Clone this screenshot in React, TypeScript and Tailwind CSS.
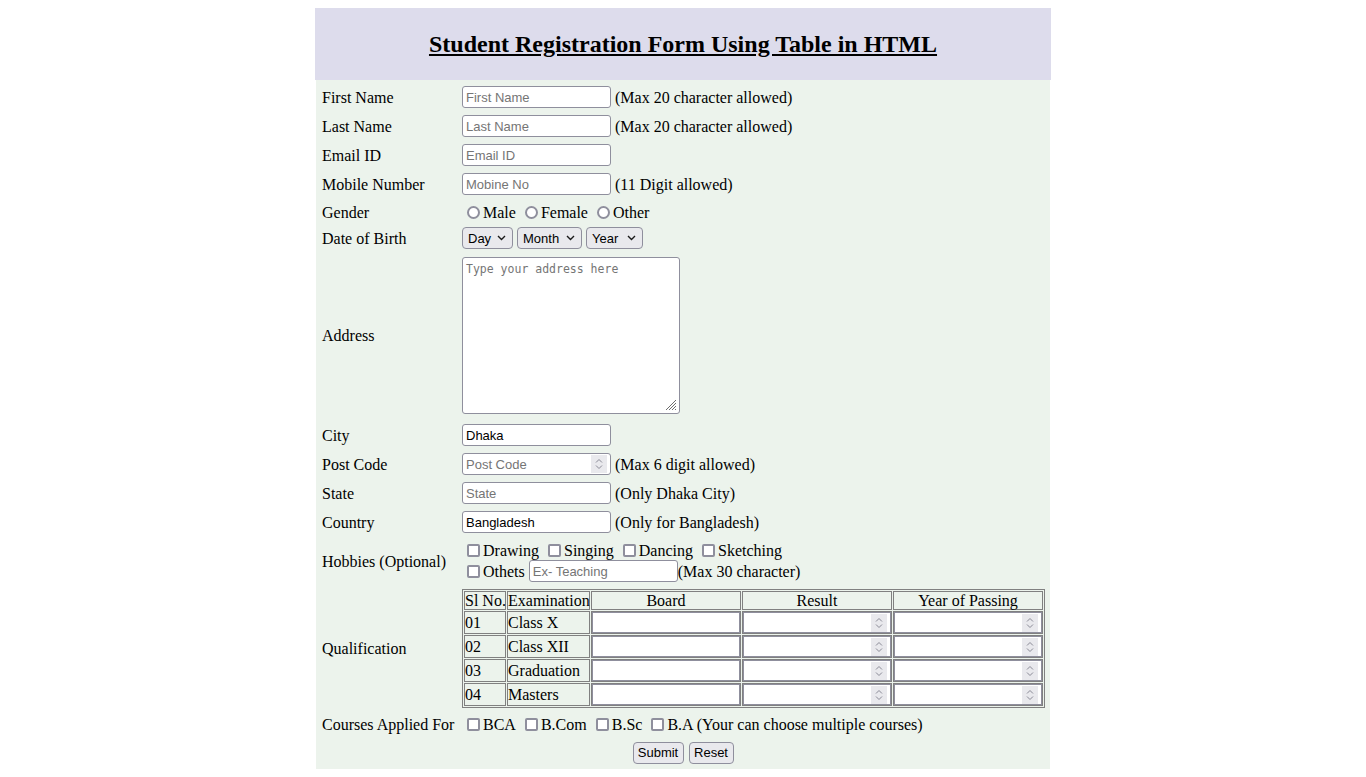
import type { ReactNode } from "react"

function Row({ label, className, children }: { label: string; className: string; children: ReactNode }) {
  return (
    <div className={`flex items-center ${className}`}>
      <div className="w-[146px] shrink-0 pl-[6px] pt-[1px] whitespace-nowrap">{label}</div>
      <div className="flex items-center">{children}</div>
    </div>
  )
}

function TextBox({ text, filled, width = "w-[149px]" }: { text: string; filled?: boolean; width?: string }) {
  return (
    <div
      className={`${width} h-[22px] shrink-0 bg-white border border-[#8f8f9d] rounded-[3px] px-[3px] pt-[1px] flex items-center font-['Liberation_Sans',sans-serif] text-[13px] ${
        filled ? "text-black" : "text-[#757575]"
      }`}
    >
      {text}
    </div>
  )
}

function Spinner() {
  return (
    <span className="w-[16px] h-[18px] shrink-0 bg-[#e9e9ed] flex items-center justify-center">
      <svg width="8" height="12" viewBox="0 0 8 12" fill="none" stroke="#8a8a96" strokeWidth="1">
        <path d="M1 4.5 L4 1.5 L7 4.5" />
        <path d="M1 7.5 L4 10.5 L7 7.5" />
      </svg>
    </span>
  )
}

function Choice({ label, round }: { label: string; round?: boolean }) {
  return (
    <span className="flex items-center">
      <span
        className={`w-[13px] h-[13px] shrink-0 ml-[5px] mr-[3px] bg-white border-2 border-[#8f8f9d] ${
          round ? "rounded-full" : "rounded-[2px]"
        }`}
      />
      <span className="whitespace-nowrap pt-[1px]">{label}</span>
    </span>
  )
}

function Select({ text, width }: { text: string; width: string }) {
  return (
    <div
      className={`${width} h-[22px] bg-[#e9e9ed] border border-[#8f8f9d] rounded-[4px] pl-[5px] pr-[6px] flex items-center justify-between font-['Liberation_Sans',sans-serif] text-[13px] text-black`}
    >
      <span className="pt-[1px]">{text}</span>
      <svg width="9" height="6" viewBox="0 0 9 6" fill="none" stroke="#1b1b1b" strokeWidth="1.4">
        <path d="M1 1 L4.5 4.5 L8 1" />
      </svg>
    </div>
  )
}

const exams = [
  ["01", "Class X"],
  ["02", "Class XII"],
  ["03", "Graduation"],
  ["04", "Masters"],
]

export default function App() {
  return (
    <div className="w-[736px] mx-auto mt-[8px] font-['Liberation_Serif',serif] text-[16px] leading-[20px] text-black">
      {/* Header */}
      <div className="h-[72px] bg-[#dddcec] flex items-center justify-center">
        <h2 className="text-[24px] font-bold underline leading-[28px]">Student Registration Form Using Table in HTML</h2>
      </div>

      {/* Form body */}
      <div className="mx-[1px] bg-[#ecf3ec] pt-[6px] pb-[5px] flex flex-col">
        <Row label="First Name" className="h-[22px]">
          <TextBox text="First Name" />
          <span className="ml-[4px] pt-[1px]">(Max 20 character allowed)</span>
        </Row>
        <Row label="Last Name" className="h-[22px] mt-[7px]">
          <TextBox text="Last Name" />
          <span className="ml-[4px] pt-[1px]">(Max 20 character allowed)</span>
        </Row>
        <Row label="Email ID" className="h-[22px] mt-[7px]">
          <TextBox text="Email ID" />
        </Row>
        <Row label="Mobile Number" className="h-[22px] mt-[7px]">
          <TextBox text="Mobine No" />
          <span className="ml-[4px] pt-[1px]">(11 Digit allowed)</span>
        </Row>
        <Row label="Gender" className="h-[20px] mt-[7px]">
          <div className="flex items-center gap-[4px]">
            <Choice round label="Male" />
            <Choice round label="Female" />
            <Choice round label="Other" />
          </div>
        </Row>
        <Row label="Date of Birth" className="h-[22px] mt-[5px]">
          <div className="flex items-center gap-[4px]">
            <Select text="Day" width="w-[51px]" />
            <Select text="Month" width="w-[65px]" />
            <Select text="Year" width="w-[57px]" />
          </div>
        </Row>
        <Row label="Address" className="h-[157px] mt-[8px]">
          <div className="w-[218px] h-[157px] bg-white border border-[#8f8f9d] rounded-[3px] flex flex-col justify-between">
            <span className="px-[3px] pt-[4px] font-['DejaVu_Sans_Mono',monospace] text-[11.5px] leading-[15px] text-[#757575]">
              Type your address here
            </span>
            <div className="flex justify-end pr-[2px] pb-[2px]">
              <svg width="13" height="13" viewBox="0 0 13 13" fill="none" stroke="#6e6e6e" strokeWidth="1">
                <path d="M12 2 L2 12" />
                <path d="M12 5 L5 12" />
                <path d="M12 8 L8 12" />
                <path d="M12 11 L11 12" />
              </svg>
            </div>
          </div>
        </Row>
        <Row label="City" className="h-[22px] mt-[10px]">
          <TextBox text="Dhaka" filled />
        </Row>
        <Row label="Post Code" className="h-[22px] mt-[7px]">
          <div className="w-[149px] h-[22px] bg-white border border-[#8f8f9d] rounded-[3px] pl-[3px] pr-[3px] flex items-center justify-between font-['Liberation_Sans',sans-serif] text-[13px] text-[#757575]">
            <span className="pt-[1px]">Post Code</span>
            <Spinner />
          </div>
          <span className="ml-[4px] pt-[1px]">(Max 6 digit allowed)</span>
        </Row>
        <Row label="State" className="h-[22px] mt-[7px]">
          <TextBox text="State" />
          <span className="ml-[4px] pt-[1px]">(Only Dhaka City)</span>
        </Row>
        <Row label="Country" className="h-[22px] mt-[7px]">
          <TextBox text="Bangladesh" filled />
          <span className="ml-[4px] pt-[1px]">(Only for Bangladesh)</span>
        </Row>
        <Row label="Hobbies (Optional)" className="h-[42px] mt-[7px]">
          <div className="flex flex-col">
            <div className="flex items-center gap-[4px] h-[20px]">
              <Choice label="Drawing" />
              <Choice label="Singing" />
              <Choice label="Dancing" />
              <Choice label="Sketching" />
            </div>
            <div className="flex items-center h-[22px]">
              <Choice label="Othets" />
              <span className="ml-[4px]">
                <TextBox text="Ex- Teaching" />
              </span>
              <span className="pt-[1px]">(Max 30 character)</span>
            </div>
          </div>
        </Row>
        <Row label="Qualification" className="h-[119px] mt-[7px]">
          <table className="border-separate border-spacing-[1px] border border-[#808080]">
            <tbody>
              <tr>
                <td className="border border-[#808080] p-0">
                  <div className="w-[40px] h-[17px] leading-[17px] whitespace-nowrap">Sl No.</div>
                </td>
                <td className="border border-[#808080] p-0">
                  <div className="w-[81px] h-[17px] leading-[17px] whitespace-nowrap">Examination</div>
                </td>
                <td className="border border-[#808080] p-0">
                  <div className="w-[148px] h-[17px] leading-[17px] text-center">Board</div>
                </td>
                <td className="border border-[#808080] p-0">
                  <div className="w-[148px] h-[17px] leading-[17px] text-center">Result</div>
                </td>
                <td className="border border-[#808080] p-0">
                  <div className="w-[148px] h-[17px] leading-[17px] text-center">Year of Passing</div>
                </td>
              </tr>
              {exams.map(([no, name]) => (
                <tr key={no}>
                  <td className="border border-[#808080] p-0">
                    <div className="h-[21px] leading-[21px]">{no}</div>
                  </td>
                  <td className="border border-[#808080] p-0">
                    <div className="h-[21px] leading-[21px] whitespace-nowrap">{name}</div>
                  </td>
                  <td className="border border-[#808080] p-0">
                    <div className="w-[148px] h-[21px] bg-white border border-[#8f8f9d]" />
                  </td>
                  <td className="border border-[#808080] p-0">
                    <div className="w-[148px] h-[21px] bg-white border border-[#8f8f9d] flex items-center justify-end pr-[3px]">
                      <Spinner />
                    </div>
                  </td>
                  <td className="border border-[#808080] p-0">
                    <div className="w-[148px] h-[21px] bg-white border border-[#8f8f9d] flex items-center justify-end pr-[3px]">
                      <Spinner />
                    </div>
                  </td>
                </tr>
              ))}
            </tbody>
          </table>
        </Row>
        <Row label="Courses Applied For" className="h-[20px] mt-[6px]">
          <div className="flex items-center gap-[4px]">
            <Choice label="BCA" />
            <Choice label="B.Com" />
            <Choice label="B.Sc" />
            <Choice label="B.A (Your can choose multiple courses)" />
          </div>
        </Row>
        <div className="h-[22px] mt-[8px] flex items-center justify-center gap-[5px] font-['Liberation_Sans',sans-serif] text-[13px]">
          <button className="w-[51px] h-[22px] bg-[#e9e9ed] border border-[#8f8f9d] rounded-[4px] text-black">Submit</button>
          <button className="w-[45px] h-[22px] bg-[#e9e9ed] border border-[#8f8f9d] rounded-[4px] text-black">Reset</button>
        </div>
      </div>
    </div>
  )
}
